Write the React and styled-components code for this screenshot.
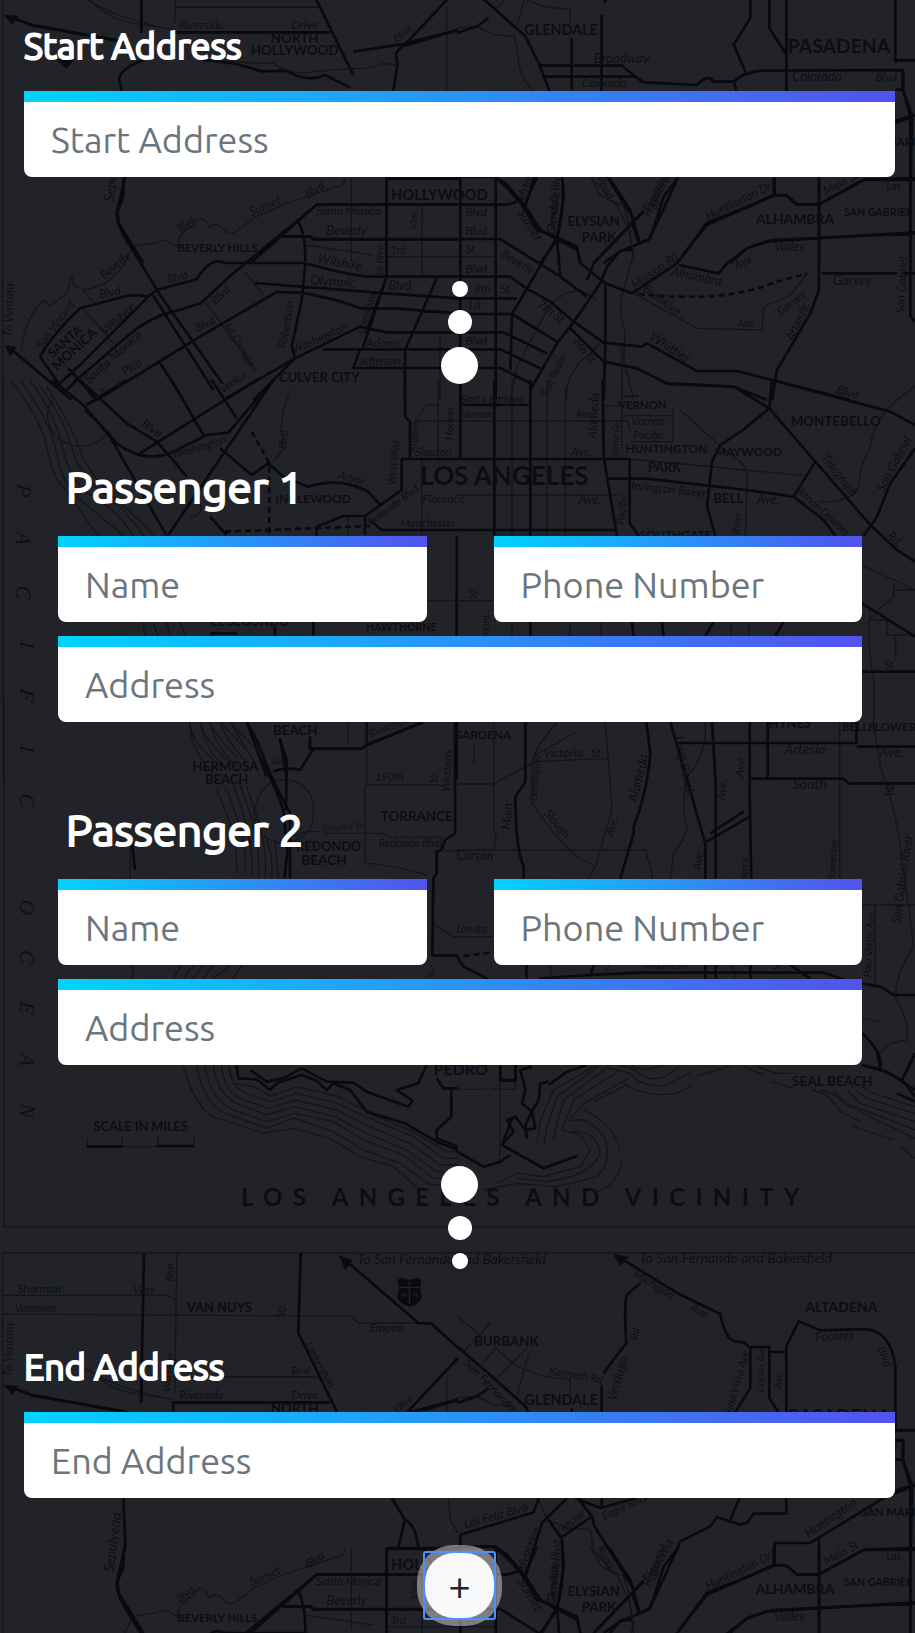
import React, { useState } from 'react';
import styled, { createGlobalStyle } from 'styled-components';

// The map is drawn in thirds of a pixel, split into sheets that share one origin each.
const TILE_HEIGHT = 4110;

const sheets = [
  {
    x: 0,
    y: -411,
    roads: [
      'M432 60L423 510',
      'M902 60L895 300L1010 535L1060 636',
      'M1040 85L1255 270L1295 272L1374 345',
      'M520 535V508H990',
      'M40 465L100 488L370 535',
      'M1374 375L1210 550',
      'M1374 500L1200 545L1060 566',
      'M370 795L376 940L352 1040L356 1080L430 1200',
      'M1175 795L1215 860L1195 942M1215 860Q1250 880 1255 945',
      'M1160 945H1374M1160 945V1200',
      'M950 1025H1374M950 1025L752 1200',
      'M848 1120H930L940 1129H1374',
    ],
    lanes: [
      'M5 60H1374M8 60V1611',
      'M530 60L525 480',
      'M5 187H500L525 200',
      'M5 243L1055 250L1075 270H1255',
      'M530 433H955',
      'M255 405Q350 470 520 500',
      'M1035 945L1030 965L850 1025L760 1065Q700 1120 680 1110Q650 1070 630 1095Q600 1040 580 1090Q540 1100 530 1150Q490 1120 470 1140L400 1150',
      'M1345 795L1350 860L1374 900',
      'M1054 945V1080',
    ],
    fills: ['M1016 66L1058 82L1036 112Z', 'M10 455L56 458L38 486Z'],
    places: [
      ['VAN NUYS', 658, 236, 39],
      ['BEVERLY HILLS', 652, 1168, 34],
      ['HOLLYWOOD', 1318, 1012, 44],
    ],
    streets: [
      ['Sherman', 118, 180, 36],
      ['Way', 432, 182, 34],
      ['Vanowen', 106, 238, 32],
      ['St', 846, 245, 32],
      ['Empire', 1160, 298, 36],
      ['To San Fernando and Bakersfield', 1355, 92, 42],
      ['Blvd', 520, 118, 30, -90],
      ['To Ventura', 38, 350, 36, -88],
      ['Van Nuys', 514, 418, 30, -86],
      ['Blvd', 902, 422, 30],
      ['Riverside', 604, 497, 36],
      ['Drive', 914, 497, 36],
      ['Lankershim', 950, 400, 32, 62],
      ['Sepulveda', 352, 930, 42, -82],
      ['Sunset', 800, 1040, 36, -24],
      ['Blvd', 950, 990, 34, -30],
      ['Santa Monica', 1045, 1055, 34],
      ['Beverly', 1040, 1117, 40],
      ['Olive', 1216, 520, 30, -42],
    ],
  },
  {
    x: 1371,
    y: -411,
    roads: [
      'M0 340L110 435L205 520L245 600L280 690L405 850L412 880L525 1060L548 1140',
      'M490 75L660 180L790 243Q805 320 835 325L860 328L880 345V465L830 545L866 628',
      'M550 150L510 185Q500 210 508 330L440 420M434 455V825',
      'M880 342H937V495L985 570M937 357H987',
      'M1315 600V400Q1300 290 1220 288L1090 292L1025 265L988 340V842H890L870 870L850 875L780 853L760 880L670 925L655 960L600 1080L575 1130L490 1165L440 1200',
      'M0 510L60 490L95 465',
      'M10 905L230 838L245 795M10 905V940H115L150 965L205 1030L250 1100L300 1130L360 1160L370 1200',
      'M355 795L430 825L540 795',
      'M330 795L255 870L230 950L205 1030',
      'M275 860L315 920L320 1000L300 1130L250 1200',
      'M310 915L405 850',
      'M848 795L820 860',
      'M1374 757L1280 795L1060 930H953V995L990 998L1020 1025H1085L1220 950L1374 945',
      'M1086 910V1200',
      'M953 997L750 1085L660 1200',
      'M820 1200L870 1155L930 1135L1374 1108',
      'M1315 592H1374M1315 622H1338V680H1315M1338 680L1360 760V1200',
      'M560 1045L410 1200M525 1080L545 1140',
    ],
    lanes: [
      'M0 60H1374',
      'M0 250L70 305L100 270M70 305L20 355M115 345L180 400L260 430L340 440V480M115 345L70 400M210 345L120 435M215 360L180 490',
      'M0 495L60 490L110 515L170 520Q180 545 185 600Q190 640 230 690',
      'M245 800L270 860L330 885L400 890L410 950L460 1010L500 1030L515 1080L530 1200',
      'M8 940V1200M118 1000V1200M8 1028H145L205 1000',
    ],
    fills: ['M468 62L516 72L490 98Z'],
    places: [
      ['BURBANK', 148, 340, 40],
      ['ALTADENA', 1153, 238, 42],
      ['GLENDALE', 312, 516, 43],
      ['SAN MARINO', 1320, 850, 34],
    ],
    streets: [
      ['To San Fernando and Bakersfield', 836, 90, 43],
      ['Michigan', 585, 165, 36, 30],
      ['Ave.', 725, 246, 36, 28],
      ['Foothill', 1134, 322, 38, -4],
      ['Blvd', 1272, 375, 34, 70],
      ['Verdugo', 494, 440, 40, -74],
      ['Rd', 545, 305, 34, -80],
      ['Kenneth Rd', 355, 438, 34, 10],
      ['San Fernando', 90, 465, 36, 46],
      ['Linda Vista Ave', 848, 460, 34, -74],
      ['Lincoln Ave', 922, 412, 28, -88],
      ['Ave.', 976, 440, 32, -86],
      ['Los Feliz Blvd', 120, 860, 36, -16],
      ['Hyperion', 225, 950, 36, -68],
      ['Glendale Blvd', 302, 1020, 34, -84],
      ['Fletcher', 348, 875, 30, -38],
      ['Road', 436, 978, 34, 64],
      ['Eagle Rock', 510, 830, 34, -24],
      ['Figueroa', 615, 990, 40, -60],
      ['Huntington Dr', 850, 1025, 36, -26],
      ['Huntington', 1128, 865, 38, -34],
      ['Main St', 1158, 970, 36, -28],
      ['Las', 1310, 982, 32],
    ],
  },
  {
    x: 0,
    y: 0,
    roads: [
      'M425 0V95',
      'M100 75L385 128',
      'M430 180Q350 210 358 245L367 275',
      'M610 180L700 190L755 205L785 214L860 212Q920 250 975 225L1050 262',
      'M1374 90L1205 140L1188 160L1192 195L1180 275',
      'M372 531L370 590L350 640Q350 680 395 745L480 885L667 1150',
      'M455 880L640 1170',
      'M1160 531V830L1090 1040L1085 1050M1160 830L1098 1000',
      'M1160 537H1374',
      'M950 614H1374M950 614L700 820L602 910L520 935Q450 950 380 1010L230 1140L190 1180',
      'M895 665Q920 710 915 800L905 900L875 1040L885 1075',
      'M848 710H930L940 717H1374',
      'M120 1070L190 1170M120 1070Q160 1000 240 925L370 890Q420 880 440 892L470 870L590 838Q620 790 650 783L680 789H915Q1020 820 1100 830H1374',
      'M440 895L250 1085L180 1150',
      'M765 849L1160 880L1374 895',
      'M290 1200L600 1010L830 876L905 878Q1020 900 1080 925H1180L1374 940',
      'M885 1075L1080 980L1160 997H1374',
      'M970 1048H1374M1374 1104H1060L1080 1048',
      'M1310 835L1215 1050V1200',
      'M885 1075L670 1200M885 1075L760 1200',
      'M30 1045L215 1200M205 1105L290 1200',
      'M475 1080L550 1200',
    ],
    lanes: [
      'M525 20H950M270 0Q330 60 400 70L480 82',
      'M630 180Q760 190 820 190Q880 230 940 215L1060 205Q1110 210 1150 190L1190 195',
      'M250 870Q350 860 395 745M250 870L275 905M250 865L225 860L215 830L200 880L150 918L130 900Q70 960 65 1050',
      'M915 735L1120 765M735 815L790 885M615 905L765 1110',
      'M1054 640V780M1266 617V830M1160 770H1374',
      'M250 925L340 1030',
      'M1340 20V270',
      'M300 1165L315 1175',
      'M1320 1000V1200',
    ],
    fills: ['M14 1035L50 1040L30 1070Z', 'M165 176H225L200 206Z'],
    places: [
      ['NORTH', 884, 128, 40],
      ['HOLLYWOOD', 884, 166, 40],
      ['CULVER CITY', 958, 1145, 39],
      ['SANTA', 204, 1034, 38, -42],
      ['MONICA', 232, 1058, 40, -42],
    ],
    streets: [
      ['Beverly', 352, 805, 34, -42],
      ['Blvd', 562, 682, 32, -34],
      ['Blvd', 534, 842, 34, -14],
      ['Blvd', 332, 890, 36, -10],
      ['Wilshire', 1016, 800, 40, 12],
      ['Olympic', 998, 858, 40, 4],
      ['Blvd', 1200, 870, 38],
      ['Wilshire', 362, 965, 36, -42],
      ['San Vincent', 176, 980, 34, -54],
      ['Santa Monica', 348, 1080, 38, -42],
      ['Blvd', 670, 895, 36, -42],
      ['Blvd', 620, 982, 34, -28],
      ['Pico', 402, 1110, 36, -32],
      ['Washington', 964, 1025, 36, -24],
      ['Adams', 1150, 1040, 36],
      ['Jefferson', 1140, 1094, 34],
      ['Venice', 705, 1155, 34, -34],
      ['Robertson', 870, 975, 34, -80],
      ['La Cienega', 712, 1040, 32, 60],
      ['Crenshaw', 1110, 940, 32, -72],
      ['To Ventura', 38, 930, 36, -88],
      ['3rd', 1194, 762, 32],
      ['Vine', 1252, 660, 30, -90],
      ['La Brea', 1148, 780, 30, -88],
    ],
  },
  {
    x: 1371,
    y: 0,
    roads: [
      'M245 197H495Q540 235 560 247L720 255Q750 220 770 245L830 245Q860 215 920 212L1338 210V270L1365 345L1360 600',
      'M255 230H535L560 247',
      'M344 115V270M434 160V245',
      'M1315 180H1374M1315 362L1374 345',
      'M830 245L838 272M988 0V270',
      'M0 531H115Q180 590 205 630L240 690L300 712L360 740L370 790L445 850L525 880L660 790L750 668L860 625L950 585V531',
      'M0 614H150L180 605M10 531V1200M116 531V1200',
      'M240 531L205 610M315 531Q325 630 300 712L165 942L160 1110',
      'M455 531L520 630L548 730L580 715L620 590L665 531',
      'M525 750L490 752L450 800L430 850L340 980L300 1030L220 1170',
      'M560 632L410 790L390 840M445 850V1030L440 1200',
      'M0 717H130L310 830L390 890',
      'M0 830H160L200 860L280 905L350 965L440 1028L555 1040L570 1030L720 1113H840L1180 1200',
      'M0 895H180M0 942H165L300 1025M0 997H140L270 1060M0 1048H130L250 1105M0 1104H130L230 1155',
      'M340 985L440 1085L540 1105L630 1150L830 1160L930 1200',
      'M300 715L310 830',
      'M665 795L785 820L810 790L870 745L945 720L1374 700',
      'M1086 531V870L1060 940L960 1110L945 1200',
      'M950 585L990 588L1020 613H1085L1220 540H1374M1360 630V950L1374 965',
      'M1095 820H1320M1338 820H1374',
    ],
    lanes: [
      'M400 531L430 585L480 615L515 690L530 760L500 870Q480 920 505 1000L500 1080L530 1200',
      'M530 880L720 985L915 990L920 920L1000 885L1050 820',
      'M160 1200L180 1100L270 930Q300 880 370 870L420 900',
      'M330 1200Q320 1120 400 1060L430 1030M495 1030V1190H545',
      'M0 770H110',
    ],
    dashed: ['M545 882Q800 910 950 848L1050 820'],
    places: [
      ['PASADENA', 1146, 160, 58],
      ['ELYSIAN', 410, 678, 40],
      ['PARK', 426, 727, 40],
      ['ALHAMBRA', 1014, 671, 42],
      ['SAN GABRIEL', 1262, 648, 32],
    ],
    streets: [
      ['Broadway', 494, 190, 40],
      ['Colorado', 442, 262, 36],
      ['Colorado', 1080, 244, 40],
      ['Blvd', 1288, 244, 36],
      ['Blvd', 58, 648, 36],
      ['Blvd', 58, 704, 36],
      ['St', 40, 760, 34],
      ['Blvd', 58, 820, 36],
      ['8th', 76, 878, 32],
      ['St', 145, 878, 32],
      ['1st', 52, 928, 32],
      ['Blvd', 58, 1036, 36],
      ['Beverly', 176, 796, 36, 30],
      ['7th St', 275, 945, 36, 36],
      ['Sunset', 208, 682, 38, 58],
      ['Glendale', 302, 640, 36, -84],
      ['Figueroa', 605, 590, 38, -68],
      ['Mission Rd', 600, 822, 36, -36],
      ['Alhambra', 716, 842, 38, 12],
      ['Brooklyn', 608, 910, 36, 36],
      ['Ave.', 866, 796, 36, -24],
      ['Valley', 998, 752, 38],
      ['Garvey', 1186, 854, 40],
      ['Garvey', 1010, 918, 34, -38],
      ['Atlantic', 1034, 970, 38, -66],
      ['Ave.', 870, 980, 32],
      ['Whittier', 632, 1054, 40, 32],
      ['San Gabriel', 1346, 856, 36, -86],
      ['San Pedro', 300, 1130, 32, -64],
      ['6th St', 375, 1060, 34, 50],
    ],
  },
  {
    x: 0,
    y: 1140,
    roads: [
      'M155 0L250 75L330 170L500 467',
      'M240 0L380 130L470 185L510 230L560 290',
      'M255 90Q320 150 350 190Q430 250 510 220L620 165L685 158L820 0',
      'M515 0L610 165M380 0L260 75',
      'M635 0L710 115M770 0L420 220M820 0L505 465M630 410L680 465',
      'M660 205L755 285L805 250L850 290L925 320Q1020 290 1105 335L1140 375M1215 0V110L1230 125V237H1374',
      'M1230 237H1205V330L1095 408H1030L950 440V467M1095 408V465M1110 420L1145 450H1374',
      'M1370 640V1200',
      'M940 725V768M825 740V768M635 768V760H710',
      'M740 1025L800 1190M840 1075L860 1190M930 1070V1107H1085L1100 1095L1270 1026',
      'M1100 1026V1095',
    ],
    lanes: [
      'M158 60A100 90 0 0 0 320 165',
      'M30 0Q120 110 140 200T180 310T260 420T330 467M60 0Q150 120 170 220T240 360T370 467M90 0Q170 110 190 210T280 350T400 467M120 20Q190 110 215 200T310 340T430 467M140 20Q210 130 240 210T350 360T460 467',
      'M10 0V1200',
      'M875 30Q830 110 850 210L820 245M1250 120L1280 75H1315V250M1245 123H1374M1315 0V180',
      'M1265 240V467M1045 408V465M1280 662H1374M560 290Q640 410 570 410',
      'M1045 1026V1090M430 726Q430 760 440 768M460 726Q465 750 475 768M500 726L510 768M540 726L555 768',
      'M570 1026Q570 1110 640 1180M600 1026Q610 1100 680 1170M630 1026Q640 1090 710 1160M660 1026Q680 1080 740 1150M690 1026L760 1140',
    ],
    dashed: ['M755 155L808 250V465', 'M675 455L1110 438'],
    places: [
      ['INGLEWOOD', 940, 368, 36],
      ['HAWTHORNE', 1204, 752, 32],
      ['EL SEGUNDO', 750, 738, 38],
      ['BEACH', 886, 1064, 40],
    ],
    streets: [
      ['Washington', 600, 212, 34, -16],
      ['Blvd', 448, 156, 36, 36],
      ['Blvd', 862, 180, 32, -84],
      ['West Blvd', 1192, 250, 32, -84],
      ['Slauson', 1300, 228, 34],
      ['Florence', 1330, 368, 36],
      ['Manchester', 1284, 440, 34],
      ['Redondo Blvd', 1185, 385, 32, -36],
      ['Arbor', 1052, 306, 34, 14],
      ['Hoover', 1360, 130, 34, -88],
      ['Angeles', 1252, 170, 30, -84],
      ['Riverside', 1170, 1050, 34, -22],
    ],
  },
  {
    x: 1371,
    y: 1140,
    roads: [
      'M10 0V237M112 0V467M220 0V467M10 75H215',
      'M437 0L440 230L480 467M0 237H518V430L545 467',
      'M605 0L635 12L830 20L937 85L945 0M937 85L858 150L790 195L765 245L750 380L775 467',
      'M937 85L1075 245L1240 435L1320 510L1374 545',
      'M945 0L1300 95L1374 135M1374 205L1300 310L1260 410L1220 467M1075 245L1010 350L870 330L570 296H450M1010 350L1100 420L1135 467',
      'M0 450H480M1215 875H1374M1215 670L1374 770',
      'M220 725V768M525 725L530 768M615 725L620 768M770 725L745 768M980 725L955 768',
      'M0 467V640',
    ],
    lanes: [
      'M165 0V467M270 0V467M325 20V467M0 123H510L518 150M440 78H495M495 0V210',
      'M500 48H545M500 107H648V85M648 107V185H520M670 90L780 190L830 230Q880 260 870 310L865 467',
      'M518 237L1045 287M0 345H480',
      'M1374 20Q1250 100 1240 200Q1210 250 1205 320Q1180 370 1090 365',
      'M0 662H108M165 725V768M338 725V768M432 725V768M822 725V768M876 725V768',
      'M1215 555L1374 630M1310 610V650Q1250 700 1240 720H1290V765H1374M1310 630H1374M1316 770V840M1240 690Q1230 800 1250 900V1060',
    ],
    places: [
      ['LOS ANGELES', 142, 316, 78],
      ['VERNON', 556, 88, 34],
      ['HUNTINGTON', 628, 220, 36],
      ['PARK', 622, 276, 38],
      ['MAYWOOD', 874, 228, 36],
      ['BELL', 814, 368, 40],
      ['MONTEBELLO', 1136, 138, 40],
      ['SOUTHGATE', 656, 476, 36],
    ],
    streets: [
      ['Santa Barbara', 106, 70, 32],
      ['Vernon', 60, 114, 32],
      ['Ave', 380, 114, 32],
      ['Vernon', 574, 136, 34],
      ['Pacific', 574, 176, 34],
      ['Ave.', 374, 228, 36],
      ['Irvington Baker', 634, 340, 36, 6],
      ['Ave.', 934, 372, 38],
      ['Ave.', 400, 372, 40],
      ['Alameda', 422, 108, 38, -86],
      ['Santa Fe', 486, 182, 30, -86],
      ['Telegraph', 1138, 294, 38, 52],
      ['Rd.', 1305, 486, 36, 46],
      ['Vernon Downey', 1090, 400, 32, 42],
      ['San Gabriel', 1322, 258, 38, -62],
      ['Blvd', 1168, 50, 38, 16],
      ['Pacific', 506, 390, 34, -84],
      ['St', 48, 654, 32],
      ['Vermont', 96, 760, 32, -88],
      ['St', 1296, 866, 34],
      ['River', 850, 430, 32, -84],
    ],
  },
  {
    x: 0,
    y: 2100,
    roads: [
      'M740 66Q790 150 795 200Q830 270 850 330L862 460L853 536',
      'M770 120L810 220L870 340V536',
      'M840 120L860 180L858 330M930 110V146H1085L1100 135L1270 66',
      'M820 215Q850 200 900 210Q920 180 940 146',
      'M1365 66V400L1335 420L1325 450L1310 455V520L1300 535L1297 766H1374',
      'M395 420L405 510',
    ],
    lanes: [
      'M12 0V1580H1374',
      'M770 310A85 85 0 1 1 940 340A85 85 0 0 1 870 426A85 85 0 0 1 770 310',
      'M1100 66V255H1325M1095 255V400M970 400H1150L1165 412H1330M1095 400V490Q1160 490 1280 525M1335 452H1374',
      'M390 430V536M398 795V836M875 410Q920 390 960 395',
      'M570 66Q570 120 640 180M600 66Q610 110 680 180M630 66Q640 100 710 170M660 66L740 150M690 66L760 140',
      'M650 270Q690 360 700 400T710 520M675 260Q710 340 725 400T735 520M695 240Q730 330 745 400T755 530M715 240Q750 330 765 400T775 536M740 260Q770 340 785 400T795 536M800 420Q820 470 815 536M825 420L835 536',
      'M520 836L545 795M550 836L580 795M580 836L610 795M610 836L640 795M640 836L690 795M700 836L725 795M1297 670L1360 710H1374M1290 795Q1320 820 1270 836',
    ],
    places: [
      ['HERMOSA', 676, 212, 40],
      ['BEACH', 680, 252, 39],
      ['TORRANCE', 1250, 362, 40],
      ['REDONDO', 986, 453, 38],
      ['BEACH', 972, 494, 41],
    ],
    streets: [
      ['190th', 1168, 244, 32],
      ['St', 1302, 246, 32],
      ['Western', 1352, 214, 36, -86],
      ['Torrance St', 1028, 390, 26, -4],
      ['Redondo', 1198, 440, 34],
      ['Blvd', 1296, 440, 34],
      ['Ave', 836, 195, 28],
    ],
  },
  {
    x: 1371,
    y: 2100,
    roads: [
      'M205 66V245L175 290Q175 440 200 500V536M208 795V836',
      'M568 66L580 160Q570 280 530 380V400L490 536',
      'M640 66L745 430V536M765 66L776 250V536M878 66V280L883 536M932 66V236',
      'M665 129H1198L1200 66M1200 140H1374M880 236H1160L1175 250H1374',
      'M745 427L883 347M760 400L860 335',
      'M0 770L20 800L90 836M245 836L400 825L550 818H1100L1180 845L1270 860L1310 885H1374M410 795L400 825M745 795V836M776 795V836M880 795V836M1000 795L1060 836',
      'M1215 1000Q1280 1060 1270 1105M1215 1095Q1290 1110 1340 1145L1374 1190M1374 1060L1335 1140',
      'M130 1095V1140H175V1095',
    ],
    lanes: [
      'M300 70Q230 140 225 200V310Q300 420 360 470L415 500L395 536M360 95L235 165',
      'M0 252H110L205 200L235 185L453 175M110 66V390L118 410L110 450M0 450H565L585 520V536M445 66L465 330L415 500',
      'M745 66Q750 170 690 230Q670 330 690 380Q680 430 650 460L640 536',
      'M1250 66L1270 200Q1320 330 1335 480L1360 660L1370 740Q1320 810 1315 885M1148 66V536M1215 615H1374M1255 615V850',
      'M0 710H108M1215 955L1270 965M1310 885Q1360 960 1350 1020L1300 1030L1270 1060',
      'M278 795L285 836M456 795L440 825M820 795Q840 815 830 836M52 130V190',
    ],
    dashed: ['M20 768L108 757'],
    places: [
      ['GARDENA', 76, 118, 36],
      ['BELLFLOWER', 1266, 94, 35],
      ['HYNES', 998, 84, 38],
    ],
    streets: [
      ['Victoria', 318, 172, 36],
      ['St', 418, 172, 36],
      ['Artesia', 1044, 162, 42],
      ['Ave.', 1304, 172, 42],
      ['South', 1058, 268, 42],
      ['St.', 1302, 284, 38],
      ['Carson', 54, 480, 38],
      ['Main', 164, 350, 38, -86],
      ['Dominguez', 244, 234, 30, -86],
      ['Slough', 292, 380, 36, 50],
      ['Alameda', 556, 238, 40, -76],
      ['Long Beach', 670, 200, 38, 78],
      ['Ave.', 862, 200, 36, -84],
      ['Ave.', 808, 270, 36, -86],
      ['Ave.', 736, 480, 36, -82],
      ['Ave.', 476, 382, 34, -74],
      ['San Gabriel River', 1348, 540, 38, -82],
      ['Palo Verde Ave.', 1248, 732, 32, -86],
      ['Anaheim', 630, 806, 36],
      ['St.', 966, 806, 36],
      ['Lomita', 44, 700, 32],
      ['Cherry', 872, 520, 34, -86],
      ['Somerset', 1138, 480, 32, -86],
    ],
  },
  {
    x: 0,
    y: 3150,
    roads: [
      'M710 45L715 85L770 88L810 120L830 100L905 75L950 92L980 120L1000 100L1050 120L1100 185L1215 220L1310 275L1374 300',
      'M750 60L800 95L850 85L905 55L980 95L1060 98L1100 125L1225 170L1240 150',
      'M1280 45L1255 100L1190 120L1235 150M1310 85L1330 115H1374M1354 115V200L1310 240V265L1374 290',
      'M260 290H370M470 288H582',
    ],
    lanes: [
      'M370 290H470M262 290V265M366 290V260M474 290V258M582 290V260',
      'M550 45Q590 200 670 210L790 250L880 235L990 265L1080 320L1180 350L1250 410',
      'M590 45Q610 170 690 195L800 235L880 205L1000 245L1090 300L1200 340L1290 405L1374 405',
      'M615 45Q630 150 700 180L800 215L885 190L1000 215L1090 270L1210 315L1300 385H1374',
      'M640 45Q650 130 710 160L800 195L885 170L1005 200L1100 250L1220 300L1310 365H1374',
      'M665 45Q670 120 720 145L805 175L890 150L1010 180L1110 230L1230 280L1320 345H1374',
      'M685 45Q690 110 740 130L810 155L890 130L1010 160L1120 210L1240 260L1330 325H1374',
      'M690 60L700 100L760 110L815 138L890 110L1015 140L1130 200L1240 245L1340 305H1374',
    ],
    places: [
      ['SCALE IN MILES', 422, 242, 38],
      ['PEDRO', 1382, 76, 48],
    ],
  },
  {
    x: 1371,
    y: 3150,
    roads: [
      'M130 45V92H175V45',
      'M165 205L135 285L260 355L360 318M160 315L130 335L80 350L0 305',
      'M225 50L190 60L205 120L195 160L225 185L205 225L210 265M275 95L250 100L245 150L225 185L235 235L205 240L175 200L150 210L170 245L135 285',
      'M390 45L330 65L275 105M1215 45L1290 65L1374 120M1374 10L1335 90M1320 130L1374 155M1260 0L1270 55',
    ],
    lanes: [
      'M0 530H1374M0 118H88M128 92V330M100 118H175V92',
      'M460 45L320 150L300 220L290 270M490 60L350 150L315 240L370 255L400 300L370 350L260 380L180 370L120 400',
      'M515 85L380 160L335 215Q390 190 440 260Q470 330 420 380L300 410L180 400L80 420',
      'M430 45L300 140L270 230L260 290M410 50L290 120L250 210L240 280M500 110L410 155',
      'M340 245Q420 240 430 310Q400 380 270 395L180 385M380 180Q470 220 490 300M495 330Q480 410 420 425',
      'M450 55Q520 60 540 90Q600 125 660 90L700 65M480 45Q530 50 550 75Q600 100 640 70L670 45M500 100Q560 145 660 130L700 110M520 45Q560 70 620 45M720 78L820 48',
      'M860 50L920 75M900 50L960 70L1010 70M940 95L1010 115M1065 120Q1120 130 1150 185L1210 215M1090 120Q1140 130 1160 160L1260 210L1374 265M1130 125L1180 165L1374 240M1170 120L1210 160L1374 215M1195 120L1230 145L1374 190M1215 110L1250 130L1374 170M1190 230L1310 270M1330 290L1374 325',
    ],
    places: [['SEAL BEACH', 1126, 107, 41]],
  },
];

const oceanLetters = [
  ['P', 50, 1470],
  ['A', 50, 1614],
  ['C', 50, 1776],
  ['I', 60, 1932],
  ['F', 60, 2084],
  ['I', 60, 2244],
  ['C', 60, 2400],
  ['O', 60, 2720],
  ['C', 60, 2870],
  ['E', 60, 3022],
  ['A', 60, 3178],
  ['N', 60, 3330],
];

const MapName = ({ item, as: Tag }) => {
  const [text, x, y, size, angle = 0] = item;
  return (
    <Tag x={x} y={y} fontSize={size} transform={`rotate(${angle} ${x} ${y})`}>
      {text}
    </Tag>
  );
};

const MapLines = () => (
  <g id="map-lines">
    {sheets.map(sheet => (
      <g key={`${sheet.x}:${sheet.y}`} transform={`translate(${sheet.x} ${sheet.y})`}>
        <Lane d={sheet.lanes.join('')} />
        <Road d={sheet.roads.join('')} />
        {sheet.dashed && <Road strokeDasharray="18 12" d={sheet.dashed.join('')} />}
        {sheet.fills && <Mark d={sheet.fills.join('')} />}
      </g>
    ))}
    {/* highway shield under the San Fernando arrow */}
    <Mark d="M1192 -270L1205 -277L1228 -270L1252 -277L1264 -270L1260 -245L1266 -220Q1262 -200 1230 -190Q1194 -200 1191 -220L1197 -245Z" />
    <Groove d="M1200 -248H1258M1228 -268V-198M1206 -224Q1216 -236 1218 -220M1240 -224Q1250 -236 1252 -220" />
  </g>
);

const MapNames = ({ from, to }) => {
  const inView = sheet => item => sheet.y + item[2] > from && sheet.y + item[2] < to;
  return sheets.map(sheet => (
    <g key={`${sheet.x}:${sheet.y}`} transform={`translate(${sheet.x} ${sheet.y})`}>
      {(sheet.places || []).filter(inView(sheet)).map(item => (
        <MapName key={item.join()} item={item} as={PlaceName} />
      ))}
      {(sheet.streets || []).filter(inView(sheet)).map(item => (
        <MapName key={item.join()} item={item} as={StreetName} />
      ))}
    </g>
  ));
};

const MapBackdrop = () => (
  <Backdrop aria-hidden="true">
    <g transform="scale(0.33333)">
      <MapLines />
      <MapNames from={60} to={TILE_HEIGHT} />
      {oceanLetters.map(([letter, x, y]) => (
        <OceanName key={y} x={x} y={y} transform={`rotate(96 ${x} ${y})`}>
          {letter}
        </OceanName>
      ))}
      <MapTitle x="1576" y="3618">
        LOS ANGELES AND VICINITY
      </MapTitle>
      <use href="#map-lines" y={TILE_HEIGHT} />
      <g transform={`translate(0 ${TILE_HEIGHT})`}>
        <MapNames from={-TILE_HEIGHT} to={770} />
      </g>
    </g>
  </Backdrop>
);

const Dots = ({ reverse }) => (
  <DotColumn reverse={reverse}>
    <Dot size={16} />
    <Dot size={24} />
    <Dot size={37} />
  </DotColumn>
);

const Passenger = ({ number }) => (
  <Group>
    <Title>Passenger {number}</Title>
    <Fields>
      <Field aria-label="Name" placeholder="Name" />
      <Field aria-label="Phone Number" placeholder="Phone Number" type="tel" />
      <WideField aria-label="Address" placeholder="Address" />
    </Fields>
  </Group>
);

export default function App() {
  const [count, setCount] = useState(2);

  return (
    <Page>
      <GlobalStyle />
      <MapBackdrop />
      <Form onSubmit={e => e.preventDefault()}>
        <FieldLabel htmlFor="start">Start Address</FieldLabel>
        <Field id="start" placeholder="Start Address" />
        <Dots />
        <Passengers>
          {Array.from({ length: count }, (_, i) => (
            <Passenger key={i} number={i + 1} />
          ))}
        </Passengers>
        <Dots reverse />
        <FieldLabel htmlFor="end">End Address</FieldLabel>
        <Field id="end" placeholder="End Address" />
        <AddButton type="button" aria-label="Add passenger" onClick={() => setCount(count + 1)}>
          +
        </AddButton>
      </Form>
    </Page>
  );
}

const fontStack = "Ubuntu, 'Open Sans', 'Noto Sans', sans-serif";

const GlobalStyle = createGlobalStyle`
  *, *::before, *::after {
    box-sizing: border-box;
  }

  body {
    margin: 0;
    background: #222328;
    font-family: ${fontStack};
  }
`;

const Page = styled.main`
  position: relative;
  overflow: hidden;
  min-height: 100vh;
`;

const Backdrop = styled.svg`
  position: absolute;
  top: 0;
  left: 0;
  width: 100%;
  height: 100%;
`;

const Road = styled.path`
  fill: none;
  stroke: #090a10;
  stroke-width: 8;
  stroke-linejoin: round;
`;

const Lane = styled.path`
  fill: none;
  stroke: #141519;
  stroke-width: 4;
`;

const Mark = styled.path`
  fill: #0a0b11;
`;

const Groove = styled.path`
  fill: none;
  stroke: #222328;
  stroke-width: 4;
`;

const PlaceName = styled.text`
  fill: #0c0d13;
  font-family: Lato, sans-serif;
  font-weight: 700;
  text-anchor: middle;
`;

const StreetName = styled.text`
  fill: #0e0f15;
  font-family: Lato, sans-serif;
  font-style: italic;
  text-anchor: middle;
`;

const OceanName = styled.text`
  fill: #0e0f15;
  font-family: 'Liberation Serif', serif;
  font-size: 64px;
  font-style: italic;
  text-anchor: middle;
`;

const MapTitle = styled.text`
  fill: #0c0d13;
  font-family: Lato, sans-serif;
  font-size: 72px;
  font-weight: 700;
  letter-spacing: 31px;
  text-anchor: middle;
`;

const Form = styled.form`
  position: relative;
  display: flex;
  flex-direction: column;
  padding: 19px 20px 15px 24px;
`;

const FieldLabel = styled.label`
  margin-bottom: 18px;
  color: #fff;
  font-size: 36px;
  line-height: 54px;
  -webkit-text-stroke: 2px #fff;
`;

const Field = styled.input`
  width: 100%;
  min-width: 0;
  height: 86px;
  padding: 0 27px;
  border: 0 solid transparent;
  border-top-width: 11px;
  border-image: linear-gradient(to right, #00d4ff, #5352ed) 1;
  border-radius: 8px;
  background: #fff;
  color: #495057;
  font-family: ${fontStack};
  font-size: 36px;

  &::placeholder {
    color: #6c757d;
    opacity: 1;
  }
`;

const WideField = styled(Field)`
  grid-column: 1 / -1;
`;

const DotColumn = styled.div`
  display: flex;
  flex-direction: ${props => (props.reverse ? 'column-reverse' : 'column')};
  align-items: center;
  gap: 13px;
  margin: ${props => (props.reverse ? '101px 0 71px' : '104px 0 76px')};
`;

const Dot = styled.span`
  width: ${props => props.size}px;
  height: ${props => props.size}px;
  border-radius: 50%;
  background: #fff;
`;

const Passengers = styled.div`
  display: flex;
  flex-direction: column;
  gap: 81px;
  padding: 0 33px 0 34px;
`;

const Group = styled.section`
  display: flex;
  flex-direction: column;
`;

const Title = styled.h2`
  margin: 0 0 22px;
  padding-left: 8px;
  color: #fff;
  font-size: 44px;
  font-weight: 400;
  line-height: 54px;
  -webkit-text-stroke: 2px #fff;
`;

const Fields = styled.div`
  display: grid;
  grid-template-columns: 1fr 1fr;
  gap: 14px 67px;
`;

const AddButton = styled.button`
  position: relative;
  align-self: center;
  width: 69px;
  height: 65px;
  margin-top: 55px;
  padding: 0;
  border: 0;
  border-radius: 29px;
  outline: none;
  background: #f8f9fa;
  box-shadow: 0 0 0 8px rgba(216, 217, 219, 0.5);
  color: #212529;
  font-family: ${fontStack};
  font-size: 40px;

  &::after {
    content: '';
    position: absolute;
    inset: -2px;
    border: 2px solid #4d90fe;
    border-radius: 3px;
  }
`;
